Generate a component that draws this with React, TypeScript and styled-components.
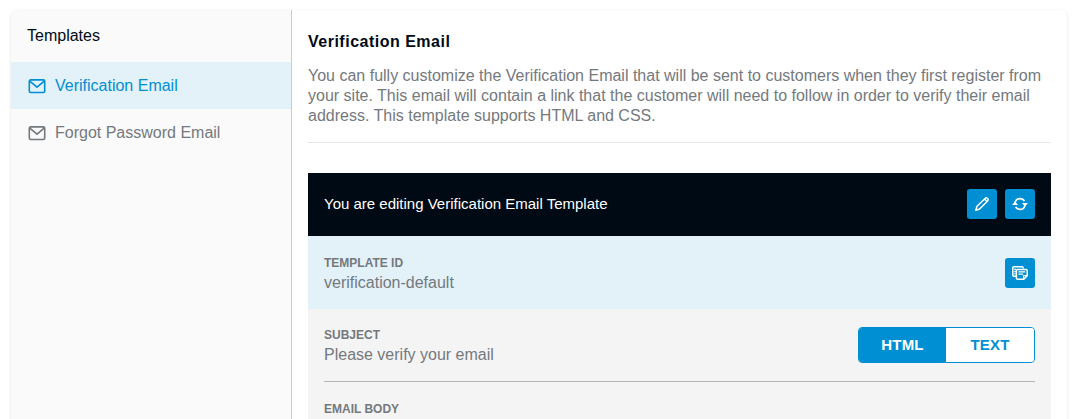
import React from "react";
import styled, { createGlobalStyle } from "styled-components";

const blue = "#008fd3";

const GlobalStyle = createGlobalStyle`
  * { box-sizing: border-box; }
  body {
    margin: 0;
    background: #fff;
    font-family: "Liberation Sans", Arial, sans-serif;
    font-size: 16px;
    line-height: 20px;
    color: #74797e;
  }
  html, body, #root { height: 100%; overflow: hidden; }
`;

const Page = styled.div`
  height: 100%;
  padding: 10px 8px 0 11px;
  overflow: hidden;
`;

const Card = styled.div`
  display: flex;
  height: 460px;
  border-radius: 6px;
  background: #fff;
  box-shadow: 0 1px 3px rgba(0, 0, 0, 0.14);
`;

const Sidebar = styled.nav`
  flex: 0 0 281px;
  border-right: 1px solid #ccc;
  border-radius: 6px 0 0 0;
  background: #fafafa;
`;

const SidebarTitle = styled.div`
  padding: 16px 16px;
  color: #000a14;
`;

const SidebarItem = styled.a<{ $active?: boolean }>`
  display: flex;
  align-items: center;
  gap: 9px;
  height: 47px;
  padding: 0 17px;
  color: ${(p) => (p.$active ? blue : "#74797e")};
  background: ${(p) => (p.$active ? "#e3f1f9" : "transparent")};
`;

const ItemIcon = styled.svg`
  width: 18px;
  height: 15px;
  margin-top: 2px;
  flex: none;
`;

const Main = styled.main`
  flex: 1;
  min-width: 0;
  padding: 22px 16px 0;
`;

const Heading = styled.h1`
  margin: 0 0 14px;
  font-size: 16px;
  line-height: 20px;
  letter-spacing: 0.5px;
  color: #000a14;
`;

const Description = styled.p`
  margin: 0 0 30px;
  padding-bottom: 16px;
  border-bottom: 1px solid #e6e6e6;
`;

const EditorHeader = styled.header`
  display: flex;
  align-items: center;
  justify-content: space-between;
  height: 63px;
  padding: 0 16px 2px;
  background: #000a14;
  color: #fff;
  font-size: 15px;
`;

const Actions = styled.div`
  display: flex;
  gap: 8px;
`;

const IconButton = styled.button`
  display: flex;
  align-items: center;
  justify-content: center;
  width: 30px;
  height: 30px;
  padding: 0;
  border: 0;
  border-radius: 3px;
  background: ${blue};
  color: #fff;
`;

const IdRow = styled.div`
  display: flex;
  align-items: center;
  justify-content: space-between;
  height: 73px;
  padding: 0 16px;
  background: #e3f1f9;
`;

const Fields = styled.div`
  height: 170px;
  padding: 0 16px;
  background: #f4f4f4;
`;

const SubjectRow = styled.div`
  display: flex;
  align-items: center;
  justify-content: space-between;
  height: 73px;
  border-bottom: 1px solid #b3b6b8;
`;

const BodyRow = styled.div`
  padding-top: 17px;
`;

const Label = styled.div`
  font-size: 12px;
  font-weight: bold;
`;

const Toggle = styled.div`
  display: flex;
  width: 177px;
  height: 36px;
  border: 1px solid ${blue};
  border-radius: 4px;
  overflow: hidden;
`;

const ToggleOption = styled.button<{ $selected?: boolean }>`
  flex: ${(p) => (p.$selected ? "0 0 87px" : "1")};
  padding: 0;
  border: 0;
  font: bold 15px/34px "Liberation Sans", Arial, sans-serif;
  letter-spacing: 0.15px;
  color: ${(p) => (p.$selected ? "#fff" : blue)};
  background: ${(p) => (p.$selected ? blue : "#fff")};
`;

const MailIcon = () => (
  <ItemIcon viewBox="0 0 18 15" fill="none" stroke="currentColor" strokeWidth="1.6">
    <rect x="1.3" y="0.9" width="15.4" height="12.6" rx="1.4" />
    <path d="M1.8 2.2L9 8.2l7.2-6" />
  </ItemIcon>
);

const PencilIcon = () => (
  <svg width="16" height="16" viewBox="0 0 16 16" fill="none" stroke="currentColor" strokeWidth="1.5" strokeLinejoin="round">
    <path d="M1.8 14.2l1.2-3.9 8.3-8.1a1.35 1.35 0 0 1 1.9 0l.6.6a1.35 1.35 0 0 1 0 1.9l-8.2 8.3z" />
    <path d="M10.5 3l2.5 2.5" />
  </svg>
);

const RefreshIcon = () => (
  <svg width="16" height="14" viewBox="0 0 16 14" fill="none" stroke="currentColor" strokeWidth="1.7">
    <path d="M3 6.2C3.4 3.4 5.6 1.6 8 1.6c1.9 0 3.6 1 4.4 2.6M13 7.8c-.4 2.8-2.6 4.6-5 4.6-1.9 0-3.6-1-4.4-2.6" />
    <path d="M0 8h6L3 4.4zM10 6h6l-3 3.6z" fill="currentColor" stroke="none" />
  </svg>
);

const NotesIcon = () => (
  <svg width="16" height="14" viewBox="0 0 16 14" fill="none" stroke="currentColor" strokeWidth="1.5" strokeLinejoin="round">
    <path d="M4 10.2H2A1.2 1.2 0 0 1 .8 9V2A1.2 1.2 0 0 1 2 .8h8a1.2 1.2 0 0 1 1.2 1.2v.6" />
    <path d="M2.2 3.4h2M2.2 5.6h1.6M2.2 7.8h1.6" strokeWidth="1.1" />
    <path d="M5.6 3.4H14a1.2 1.2 0 0 1 1.2 1.2v5.2l-3.4 3.4H5.6A1.2 1.2 0 0 1 4.4 12V4.6a1.2 1.2 0 0 1 1.2-1.2z" />
    <path d="M11.6 13V9.7h3.4M6.5 5.9h6.8M6.5 8.2h4.6" strokeWidth="1.2" />
  </svg>
);

export default function App() {
  return (
    <Page>
      <GlobalStyle />
      <Card>
        <Sidebar>
          <SidebarTitle>Templates</SidebarTitle>
          <SidebarItem $active>
            <MailIcon />
            Verification Email
          </SidebarItem>
          <SidebarItem>
            <MailIcon />
            Forgot Password Email
          </SidebarItem>
        </Sidebar>
        <Main>
          <Heading>Verification Email</Heading>
          <Description>
            You can fully customize the Verification Email that will be sent to customers when they
            first register from your site. This email will contain a link that the customer will need
            to follow in order to verify their email address. This template supports HTML and CSS.
          </Description>
          <EditorHeader>
            You are editing Verification Email Template
            <Actions>
              <IconButton aria-label="Edit"><PencilIcon /></IconButton>
              <IconButton aria-label="Reset"><RefreshIcon /></IconButton>
            </Actions>
          </EditorHeader>
          <IdRow>
            <div>
              <Label>TEMPLATE ID</Label>
              verification-default
            </div>
            <IconButton aria-label="Copy"><NotesIcon /></IconButton>
          </IdRow>
          <Fields>
            <SubjectRow>
              <div>
                <Label>SUBJECT</Label>
                Please verify your email
              </div>
              <Toggle>
                <ToggleOption $selected>HTML</ToggleOption>
                <ToggleOption>TEXT</ToggleOption>
              </Toggle>
            </SubjectRow>
            <BodyRow>
              <Label>EMAIL BODY</Label>
            </BodyRow>
          </Fields>
        </Main>
      </Card>
    </Page>
  );
}
